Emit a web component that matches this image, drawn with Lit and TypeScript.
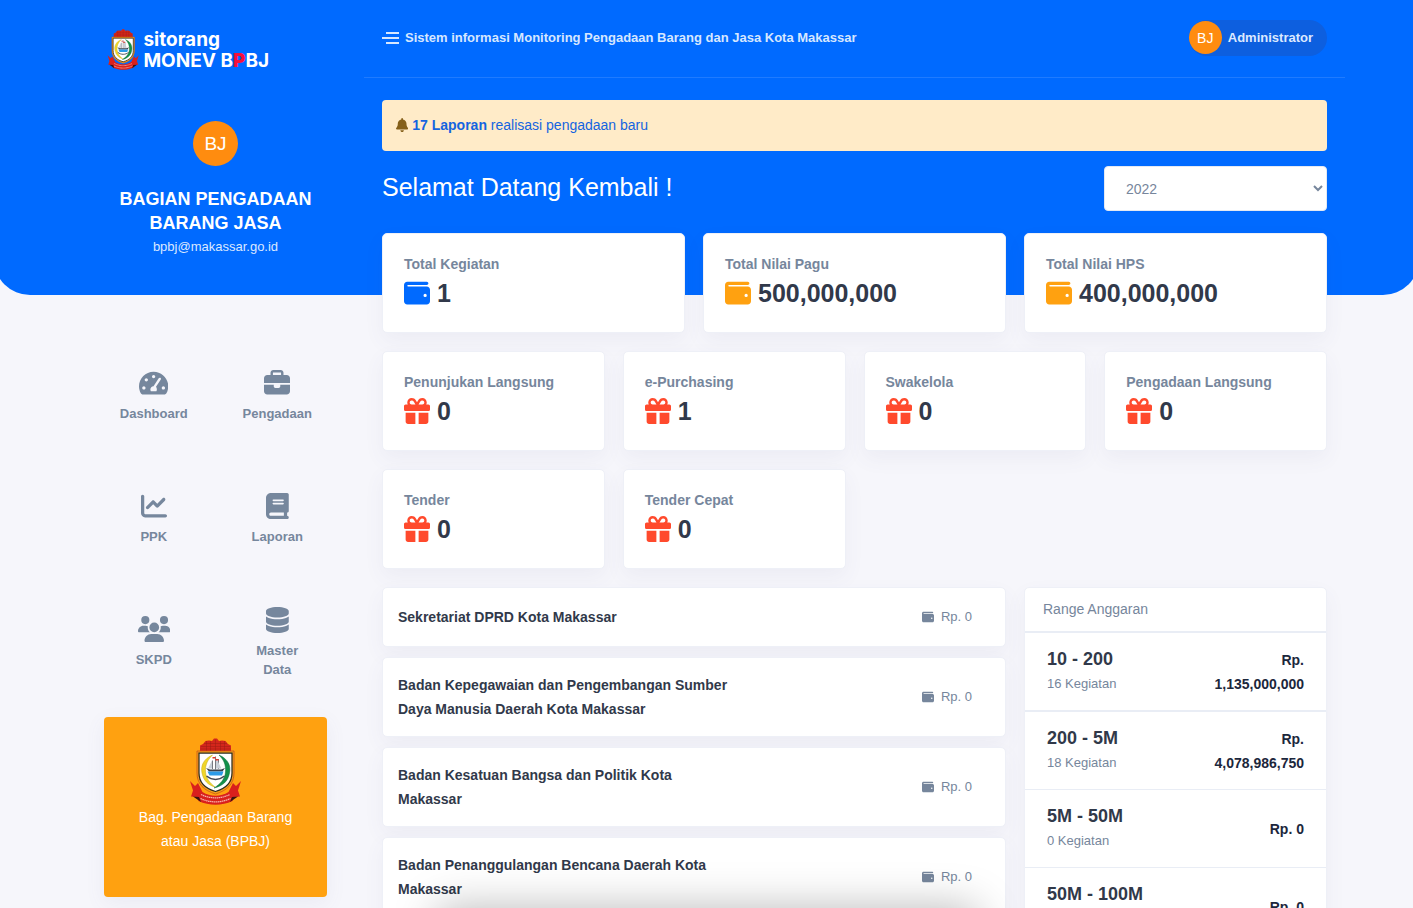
import { LitElement, html, css, svg } from "lit";
import { customElement, property } from "lit/decorators.js";

type Icon = { w: number; d: string };

const ICONS: Record<string, Icon> = {
  wallet: {
    w: 512,
    d: "M64 32C28.7 32 0 60.7 0 96V416c0 35.3 28.7 64 64 64H448c35.3 0 64-28.7 64-64V192c0-35.3-28.7-64-64-64H80c-8.8 0-16-7.2-16-16s7.2-16 16-16H448c17.7 0 32-14.3 32-32s-14.3-32-32-32H64zM416 272a32 32 0 1 1 0 64 32 32 0 1 1 0-64z",
  },
  gift: {
    w: 512,
    d: "M190.5 68.8L225.3 128H224 152c-22.1 0-40-17.9-40-40s17.9-40 40-40h2.2c14.9 0 28.8 7.9 36.3 20.8zM64 88c0 14.4 3.5 28 9.6 40H32c-17.7 0-32 14.3-32 32v64c0 17.7 14.3 32 32 32H480c17.7 0 32-14.3 32-32V160c0-17.7-14.3-32-32-32H438.4c6.1-12 9.6-25.6 9.6-40c0-48.6-39.4-88-88-88h-2.2c-31.9 0-61.5 16.9-77.7 44.4L256 85.5l-24.1-41C215.7 16.9 186.1 0 154.2 0H152C103.4 0 64 39.4 64 88zm336 0c0 22.1-17.9 40-40 40H288h-1.3l34.8-59.2C329.1 55.9 342.9 48 357.8 48H360c22.1 0 40 17.9 40 40zM32 288V464c0 26.5 21.5 48 48 48H224V288H32zM288 512H432c26.5 0 48-21.5 48-48V288H288V512z",
  },
  bell: {
    w: 448,
    d: "M224 0c-17.7 0-32 14.3-32 32V51.2C119 66 64 130.6 64 208v18.8c0 47-17.3 92.4-48.5 127.6l-7.4 8.3c-8.4 9.4-10.4 22.9-5.3 34.4S19.4 416 32 416H416c12.6 0 24-7.4 29.2-18.9s3.1-25-5.3-34.4l-7.4-8.3C401.3 319.2 384 273.9 384 226.8V208c0-77.4-55-142-128-156.8V32c0-17.7-14.3-32-32-32zm45.3 493.3c12-12 18.7-28.3 18.7-45.3H224 160c0 17 6.7 33.3 18.7 45.3s28.3 18.7 45.3 18.7s33.3-6.7 45.3-18.7z",
  },
  gauge: {
    w: 576,
    d: "M288 32C128.94 32 0 160.94 0 320c0 52.8 14.25 102.26 39.06 144.8 5.61 9.62 16.3 15.2 27.44 15.2h443c11.14 0 21.83-5.58 27.44-15.2C561.75 422.26 576 372.8 576 320c0-159.06-128.94-288-288-288zm0 64c17.67 0 32 14.33 32 32s-14.33 32-32 32-32-14.33-32-32 14.33-32 32-32zM96 384c-17.67 0-32-14.33-32-32s14.33-32 32-32 32 14.33 32 32-14.33 32-32 32zm48-160c-17.67 0-32-14.33-32-32s14.33-32 32-32 32 14.33 32 32-14.33 32-32 32zm285-38L335 332C346 345 352 364.54 352 384c0 11.72-3.38 22.55-8.88 32H232.88c-5.5-9.45-8.88-20.28-8.88-32 0-34 27-62 62-64l102-158c8-12 22-15 33-8s15 21 8 32zM480 384c-17.67 0-32-14.33-32-32s14.33-32 32-32 32 14.33 32 32-14.33 32-32 32z",
  },
  briefcase: {
    w: 512,
    d: "M184 48H328c4.4 0 8 3.6 8 8V96H176V56c0-4.4 3.6-8 8-8zm-56 8V96H64C28.7 96 0 124.7 0 160v96H192 320 512V160c0-35.3-28.7-64-64-64H384V56c0-30.9-25.1-56-56-56H184c-30.9 0-56 25.1-56 56zM512 288H320v32c0 17.7-14.3 32-32 32H224c-17.7 0-32-14.3-32-32V288H0V416c0 35.3 28.7 64 64 64H448c35.3 0 64-28.7 64-64V288z",
  },
  chart: {
    w: 512,
    d: "M64 64c0-17.7-14.3-32-32-32S0 46.3 0 64V400c0 44.2 35.8 80 80 80H480c17.7 0 32-14.3 32-32s-14.3-32-32-32H80c-8.8 0-16-7.2-16-16V64zm406.6 86.6c12.5-12.5 12.5-32.8 0-45.3s-32.8-12.5-45.3 0L320 210.7l-57.4-57.4c-12.5-12.5-32.8-12.5-45.3 0l-112 112c-12.5 12.5-12.5 32.8 0 45.3s32.8 12.5 45.3 0L240 221.3l57.4 57.4c12.5 12.5 32.8 12.5 45.3 0l128-128z",
  },
  book: {
    w: 448,
    d: "M96 0C43 0 0 43 0 96V416c0 53 43 96 96 96H384h32c17.7 0 32-14.3 32-32s-14.3-32-32-32V384c17.7 0 32-14.3 32-32V32c0-17.7-14.3-32-32-32H384 96zm0 384H352v64H96c-17.7 0-32-14.3-32-32s14.3-32 32-32zm32-240c0-8.8 7.2-16 16-16H336c8.8 0 16 7.2 16 16s-7.2 16-16 16H144c-8.8 0-16-7.2-16-16zm16 48H336c8.8 0 16 7.2 16 16s-7.2 16-16 16H144c-8.8 0-16-7.2-16-16s7.2-16 16-16z",
  },
  users: {
    w: 640,
    d: "M144 0a80 80 0 1 1 0 160A80 80 0 1 1 144 0zM512 0a80 80 0 1 1 0 160A80 80 0 1 1 512 0zM0 298.7C0 239.8 47.8 192 106.7 192h42.7c15.9 0 31 3.5 44.6 9.7c-1.3 7.2-1.9 14.7-1.9 22.3c0 38.2 16.8 72.5 43.3 96c-.2 0-.4 0-.7 0H21.3C9.6 320 0 310.4 0 298.7zM405.3 320c-.2 0-.4 0-.7 0c26.6-23.5 43.3-57.8 43.3-96c0-7.6-.7-15-1.9-22.3c13.6-6.3 28.7-9.7 44.6-9.7h42.7C592.2 192 640 239.8 640 298.7c0 11.8-9.6 21.3-21.3 21.3H405.3zM224 224a96 96 0 1 1 192 0 96 96 0 1 1 -192 0zM128 485.3C128 411.7 187.7 352 261.3 352H378.7C452.3 352 512 411.7 512 485.3c0 14.7-11.9 26.7-26.7 26.7H154.7c-14.7 0-26.7-11.9-26.7-26.7z",
  },
  database: {
    w: 448,
    d: "M448 80v48c0 44.2-100.3 80-224 80S0 172.2 0 128V80C0 35.8 100.3 0 224 0S448 35.8 448 80zM393.2 214.7c20.8-7.4 39.9-16.9 54.8-28.6V288c0 44.2-100.3 80-224 80S0 332.2 0 288V186.1c14.9 11.8 34 21.2 54.8 28.6C99.7 230.7 159.5 240 224 240s124.3-9.3 169.2-25.3zM0 346.1c14.9 11.8 34 21.2 54.8 28.6C99.7 390.7 159.5 400 224 400s124.3-9.3 169.2-25.3c20.8-7.4 39.9-16.9 54.8-28.6V432c0 44.2-100.3 80-224 80S0 476.2 0 432V346.1z",
  },
};

@customElement("app-icon")
class AppIcon extends LitElement {
  @property() name = "wallet";

  static styles = css`
    :host {
      display: inline-flex;
      height: 26px;
    }
    svg {
      display: block;
      height: 100%;
      width: auto;
      fill: currentColor;
    }
  `;

  render() {
    const icon = ICONS[this.name];
    return html`<svg viewBox="0 0 ${icon.w} 512" aria-hidden="true">${svg`<path d=${icon.d}></path>`}</svg>`;
  }
}

@customElement("city-crest")
class CityCrest extends LitElement {
  static styles = css`
    :host {
      display: block;
      height: 67px;
    }
    svg {
      display: block;
      height: 100%;
      width: auto;
    }
  `;

  render() {
    return html`<svg viewBox="0 0 106 134" role="img" aria-label="Lambang Kota Makassar">
      <path d="M22 28V15l6-3 5-6 7-1 6 1 4-5h6l4 5 6-1 7 1 5 6 6 3v13z" fill="#d3261c" />
      <path d="M24 17h58M23 22h60M30 11h46M35 6v20M43 6v20M53 3v23M63 6v20M71 6v20" stroke="#9c1d12" stroke-width="1" fill="none" />
      <path d="M16 26h74v44c0 22-14 35-37 42C30 105 16 92 16 70z" fill="#f4a11a" stroke="#c5521a" stroke-width="1.5" />
      <path d="M20 30h66v40c0 20-12 31-33 37C32 101 20 90 20 70z" fill="#fff" stroke="#2d2a20" stroke-width="2.5" />
      <path d="M47 34C29 42 23 55 26 70c3 15 12 24 26 28-10-8-18-17-19-30-1-14 4-24 14-34z" fill="#f0d628" stroke="#c3a81b" stroke-width="1" />
      <path d="M60 34c18 8 24 21 21 36-3 17-14 26-31 30 13-8 22-18 23-32 1-14-3-24-13-34z" fill="#12904a" stroke="#0c6b36" stroke-width="1" />
      <path d="M53 37v26M47 45v17M59 42v20" stroke="#4c5058" stroke-width="1.5" />
      <path d="M54 40l11 21H54zM46 45v16h-8z" fill="#c9d0d8" />
      <path d="M47 38h6v3h-6zM53 42h6v3h-6z" fill="#e0352a" />
      <path d="M34 60l8 3h22l8-3-5 7H40z" fill="#39404a" />
      <path d="M37 67h32l-3 8H41z" fill="#2b9be8" />
      <path d="M35 76c11 9 25 9 36 0" stroke="#444b55" stroke-width="3" fill="none" />
      <path d="M2 86l10 10 6-6 9 18c16 10 36 10 52 0l9-18 6 6 10-10-6 19 4 12-12 1-3 8c-22 10-46 10-68 0l-3-8-12-1 4-12z" fill="#d9201d" />
      <path d="M8 117l12 1 4 10zM98 117l-12 1-4 10z" fill="#3a1410" />
      <path d="M24 113c19 9 39 9 58 0M23 121c20 9 40 9 60 0" stroke="#f7b3aa" stroke-width="2.5" stroke-dasharray="3 1" fill="none" />
    </svg>`;
  }
}

const MENU = [
  ["gauge", "Dashboard"],
  ["briefcase", "Pengadaan"],
  ["chart", "PPK"],
  ["book", "Laporan"],
  ["users", "SKPD"],
  ["database", "Master Data"],
];

const TOTALS = [
  ["Total Kegiatan", "1", "blue"],
  ["Total Nilai Pagu", "500,000,000", "amber"],
  ["Total Nilai HPS", "400,000,000", "amber"],
];

const METHODS = [
  ["Penunjukan Langsung", "0"],
  ["e-Purchasing", "1"],
  ["Swakelola", "0"],
  ["Pengadaan Langsung", "0"],
  ["Tender", "0"],
  ["Tender Cepat", "0"],
];

const AGENCIES = [
  "Sekretariat DPRD Kota Makassar",
  "Badan Kepegawaian dan Pengembangan Sumber Daya Manusia Daerah Kota Makassar",
  "Badan Kesatuan Bangsa dan Politik Kota Makassar",
  "Badan Penanggulangan Bencana Daerah Kota Makassar",
];

const RANGES = [
  ["10 - 200", "16 Kegiatan", "Rp. 1,135,000,000"],
  ["200 - 5M", "18 Kegiatan", "Rp. 4,078,986,750"],
  ["5M - 50M", "0 Kegiatan", "Rp. 0"],
  ["50M - 100M", "0 Kegiatan", "Rp. 0"],
];

@customElement("app-root")
class AppRoot extends LitElement {
  static styles = css`
    :host {
      display: block;
      height: 100vh;
      overflow: hidden;
      background: #f6f6fb;
      color: #31394a;
      font: 14px/24px "Liberation Sans", Arial, sans-serif;
    }
    * {
      box-sizing: border-box;
    }
    h1, h2, h3, p, ul {
      margin: 0;
      padding: 0;
      list-style: none;
    }
    a {
      color: inherit;
      text-decoration: none;
    }
    .page {
      display: grid;
      grid-template-rows: 295px auto;
    }
    .band {
      grid-area: 1 / 1;
      margin: 0 -6px;
      background: #006aff;
      border-radius: 0 0 36px 36px;
    }
    .layout {
      grid-area: 1 / 1 / 3 / 2;
      display: grid;
      grid-template-columns: 296px minmax(0, 1fr);
      width: 100%;
      max-width: 1277px;
      margin: 0 auto;
    }
    .side {
      padding: 28px 37px 0 36px;
    }
    .brand {
      display: flex;
      align-items: center;
      gap: 4px;
      height: 42px;
      padding-left: 3px;
      color: #fff;
      font: 700 19px/21px Inter, "Liberation Sans", sans-serif;
    }
    .brand city-crest {
      height: 41px;
    }
    .brand span {
      padding-top: 2px;
    }
    .brand b {
      color: #f5103c;
    }
    .avatar {
      display: grid;
      place-items: center;
      width: 45px;
      height: 45px;
      border-radius: 50%;
      background: #ff8c0f;
      color: #fff;
      font-size: 19px;
    }
    .profile {
      display: flex;
      flex-direction: column;
      align-items: center;
      padding-top: 51px;
      color: #fff;
      text-align: center;
    }
    .profile h2 {
      margin-top: 21px;
      font-size: 18px;
      line-height: 24px;
    }
    .profile p {
      font-size: 13px;
      color: #dbe8ff;
    }
    .menu {
      display: grid;
      grid-template-columns: repeat(2, minmax(0, 1fr));
      grid-auto-rows: 123px;
      margin: 76px -12px 0;
      color: #76879d;
    }
    .menu a {
      display: flex;
      flex-direction: column;
      align-items: center;
      justify-content: center;
      gap: 8px;
      padding: 0 25px;
      font-size: 13px;
      line-height: 19px;
      font-weight: 700;
      text-align: center;
    }
    .unit {
      display: flex;
      flex-direction: column;
      align-items: center;
      margin-top: 13px;
      padding: 21px 22px 44px;
      border-radius: 4px;
      background: #ffa110;
      color: #fff;
      text-align: center;
      box-shadow: 0 6px 20px rgba(100, 100, 150, 0.08);
    }
    .topbar {
      display: flex;
      align-items: center;
      justify-content: space-between;
      height: 78px;
      padding: 0 18px 2px;
      border-bottom: 1px solid #1f7bff;
      color: #d6e7ff;
      font-size: 13px;
      font-weight: 700;
    }
    .tagline {
      display: flex;
      align-items: center;
      gap: 6px;
    }
    .toggle {
      display: block;
      padding: 0;
      border: 0;
      background: none;
      color: inherit;
    }
    .toggle svg {
      display: block;
    }
    .account {
      display: flex;
      align-items: center;
      gap: 6px;
      height: 36px;
      padding: 0 14px 0 0;
      border: 0;
      border-radius: 18px;
      background: #0d5fdf;
      color: #dce9ff;
      font: inherit;
    }
    .account .avatar {
      width: 33px;
      height: 33px;
      font-size: 14px;
      font-weight: 400;
    }
    .content {
      padding: 22px 18px 0;
    }
    .alert {
      display: flex;
      align-items: center;
      gap: 4px;
      height: 51px;
      padding: 0 14px 2px;
      border-radius: 4px;
      background: #ffebc8;
      color: #85601a;
    }
    .alert app-icon {
      height: 14px;
    }
    .alert a {
      color: #1464e0;
    }
    .welcome {
      display: flex;
      justify-content: space-between;
      align-items: start;
      padding: 15px 0 22px;
    }
    .welcome h1 {
      padding-top: 6px;
      color: #fff;
      font-size: 25px;
      line-height: 30px;
      font-weight: 400;
    }
    .year {
      display: grid;
      width: 223px;
    }
    .year select {
      grid-area: 1 / 1;
      appearance: none;
      width: 100%;
      height: 45px;
      padding: 0 21px;
      border: 1px solid #e3e9f3;
      border-radius: 4px;
      background: #fff;
      color: #77869c;
      font: inherit;
    }
    .year svg {
      grid-area: 1 / 1;
      place-self: center end;
      margin-right: 4px;
      pointer-events: none;
    }
    .cards {
      display: grid;
      gap: 18px;
      margin-bottom: 18px;
    }
    .three {
      grid-template-columns: repeat(3, minmax(0, 1fr));
    }
    .four {
      grid-template-columns: repeat(4, minmax(0, 1fr));
    }
    .card {
      border: 1px solid #eef0f7;
      border-radius: 5px;
      background: #fff;
      box-shadow: 0 8px 20px rgba(90, 90, 140, 0.06);
    }
    .stat {
      padding: 20px 21px 24px;
    }
    .stat h3 {
      color: #76869c;
      font-size: 14px;
      line-height: 20px;
    }
    .stat p {
      display: flex;
      align-items: center;
      gap: 7px;
      margin-top: 4px;
      font-size: 25px;
      line-height: 30px;
      font-weight: 700;
    }
    .blue {
      color: #006aff;
    }
    .amber {
      color: #ffa110;
    }
    .red {
      color: #ff4a2d;
    }
    .columns {
      display: grid;
      grid-template-columns: minmax(0, 624fr) minmax(0, 303fr);
      gap: 18px;
      align-items: start;
    }
    .agencies {
      display: grid;
      gap: 10px;
    }
    .agency {
      display: grid;
      grid-template-columns: 7fr 5fr;
      align-items: center;
      min-height: 60px;
      padding: 15px;
    }
    .agency h3 {
      padding-right: 12px;
      font-size: 14px;
      line-height: 24px;
    }
    .agency p {
      display: flex;
      justify-content: flex-end;
      align-items: center;
      gap: 7px;
      padding-right: 18px;
      color: #76869c;
      font-size: 13px;
    }
    .agency app-icon {
      height: 12px;
    }
    .ranges h2 {
      padding: 9px 18px 10px;
      border-bottom: 2px solid #e9edf5;
      color: #76869c;
      font-size: 14px;
      font-weight: 400;
    }
    .range {
      display: grid;
      grid-template-columns: 7fr 5fr;
      align-items: center;
      padding: 14px 22px;
      border-bottom: 1px solid #e9edf5;
    }
    .range:first-child {
      border-bottom-width: 2px;
    }
    .range h3 {
      font-size: 18px;
      line-height: 25px;
    }
    .range p {
      color: #76869c;
      font-size: 13px;
    }
    .range strong {
      color: #1c273c;
      text-align: right;
    }
    .shade {
      position: fixed;
      top: 100vh;
      left: 50%;
      width: 540px;
      height: 60px;
      margin-left: -270px;
      box-shadow: 0 0 44px rgba(0, 0, 0, 0.28);
      pointer-events: none;
    }
  `;

  render() {
    return html`
      <div class="page">
        <div class="band"></div>
        <div class="layout">
          <aside class="side">
            <a class="brand" href="#">
              <city-crest></city-crest>
              <span>sitorang<br />MONEV B<b>P</b>BJ</span>
            </a>
            <div class="profile">
              <span class="avatar">BJ</span>
              <h2>BAGIAN PENGADAAN BARANG JASA</h2>
              <p>bpbj@makassar.go.id</p>
            </div>
            <nav class="menu">
              ${MENU.map(([icon, label]) => html`<a href="#"><app-icon name=${icon}></app-icon><span>${label}</span></a>`)}
            </nav>
            <div class="unit">
              <city-crest></city-crest>
              <p>Bag. Pengadaan Barang atau Jasa (BPBJ)</p>
            </div>
          </aside>
          <main>
            <header class="topbar">
              <div class="tagline">
                <button class="toggle" aria-label="Menu">
                  <svg width="17" height="12" viewBox="0 0 17 12" fill="none" stroke="currentColor" stroke-width="2">
                    <path d="M4 1h13M0 6h17M4 11h13" />
                  </svg>
                </button>
                <span>Sistem informasi Monitoring Pengadaan Barang dan Jasa Kota Makassar</span>
              </div>
              <button class="account"><span class="avatar">BJ</span>Administrator</button>
            </header>
            <div class="content">
              <div class="alert">
                <app-icon name="bell"></app-icon>
                <a href="#"><b>17 Laporan</b> realisasi pengadaan baru</a>
              </div>
              <div class="welcome">
                <h1>Selamat Datang Kembali !</h1>
                <div class="year">
                  <select aria-label="Tahun"><option>2022</option></select>
                  <svg width="10" height="7" viewBox="0 0 10 7" fill="none" stroke="#76869c" stroke-width="2">
                    <path d="M1 1l4 4 4-4" />
                  </svg>
                </div>
              </div>
              <section class="cards three">
                ${TOTALS.map(
                  ([label, value, tone]) => html`<article class="card stat">
                    <h3>${label}</h3>
                    <p><app-icon class=${tone} name="wallet"></app-icon>${value}</p>
                  </article>`
                )}
              </section>
              <section class="cards four">
                ${METHODS.map(
                  ([label, value]) => html`<article class="card stat">
                    <h3>${label}</h3>
                    <p><app-icon class="red" name="gift"></app-icon>${value}</p>
                  </article>`
                )}
              </section>
              <div class="columns">
                <section class="agencies">
                  ${AGENCIES.map(
                    (name) => html`<article class="card agency">
                      <h3>${name}</h3>
                      <p><app-icon name="wallet"></app-icon>Rp. 0</p>
                    </article>`
                  )}
                </section>
                <section class="card ranges">
                  <h2>Range Anggaran</h2>
                  <ul>
                    ${RANGES.map(
                      ([title, count, total]) => html`<li class="range">
                        <div>
                          <h3>${title}</h3>
                          <p>${count}</p>
                        </div>
                        <strong>${total}</strong>
                      </li>`
                    )}
                  </ul>
                </section>
              </div>
            </div>
          </main>
        </div>
      </div>
      <div class="shade"></div>
    `;
  }
}
